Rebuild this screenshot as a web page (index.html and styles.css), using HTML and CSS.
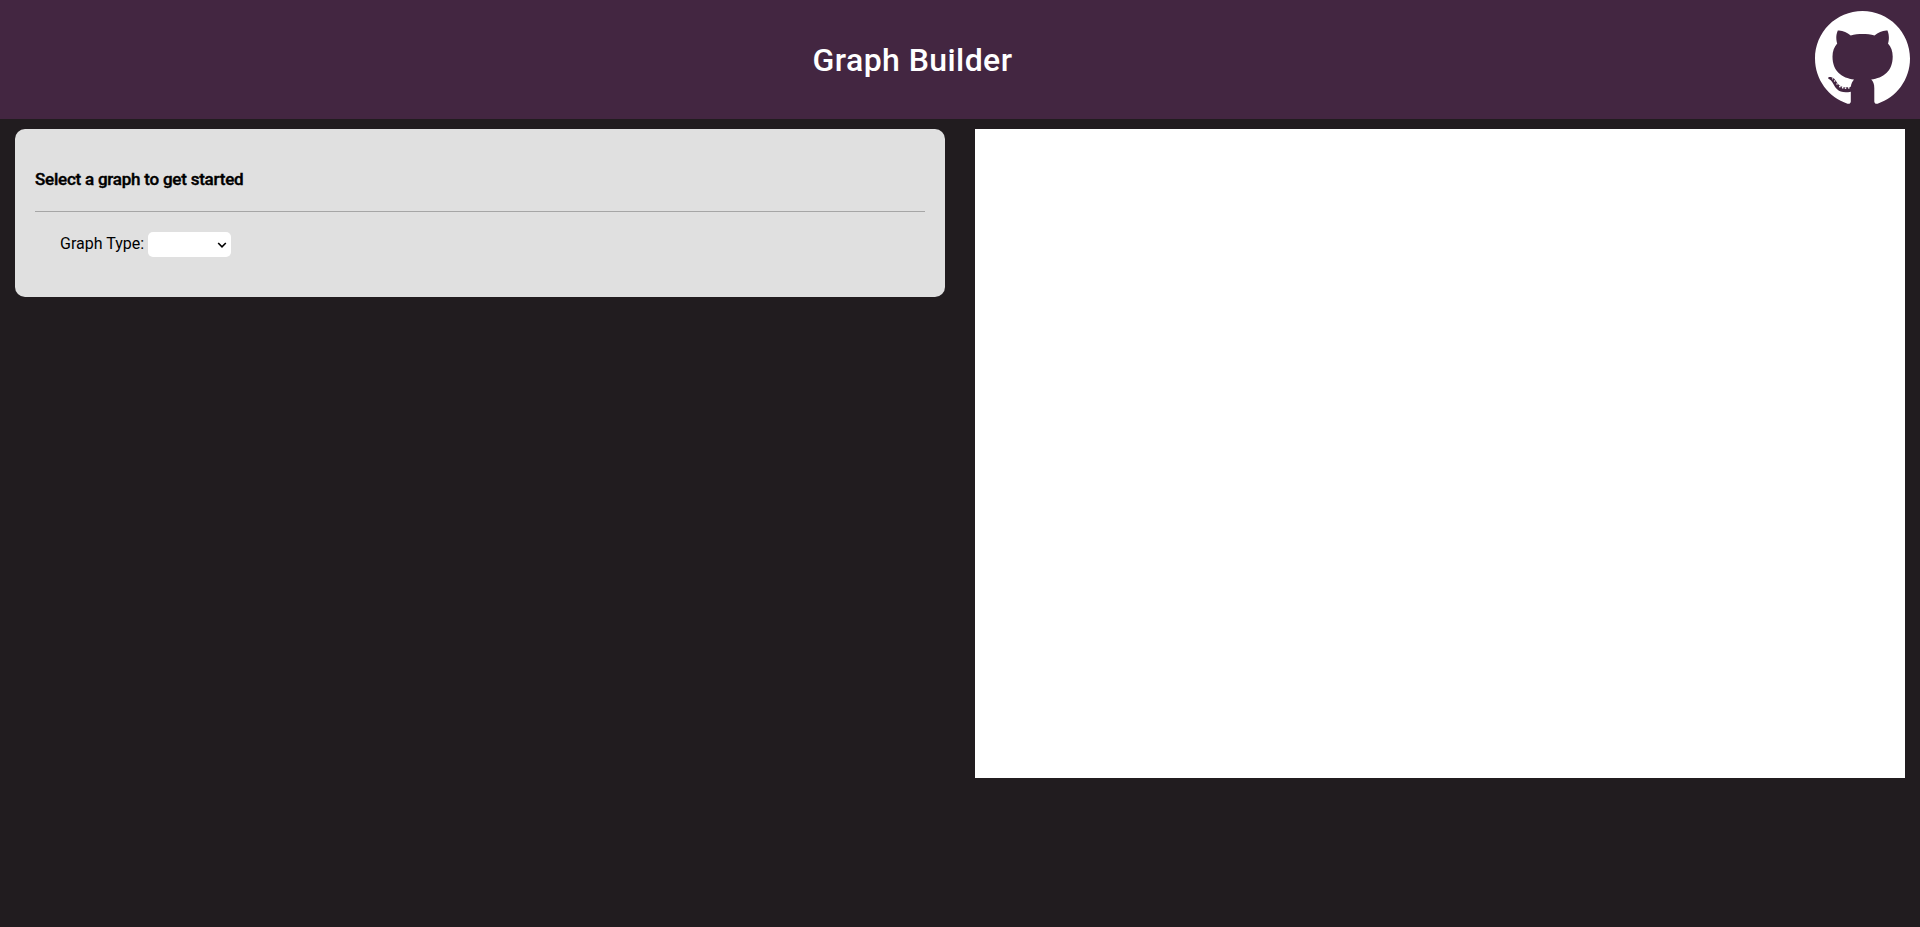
FILE: index.html
```html
<!DOCTYPE html>
<html lang="en">
<head>
<meta charset="utf-8">
<title>Graph Builder</title>
<link rel="stylesheet" href="styles.css">
</head>
<body>
<header class="header">
  <h1 class="title">Graph Builder</h1>
  <a class="repo" href="#" aria-label="GitHub">
    <svg class="mark" viewBox="0 0 95 93">
      <path fill="#fff" d="M47.500 0C21 0 0 21.300 0 47.600c0 21.100 13.600 38.900 32.500 45.100 2.400.5 3.300-1 3.300-2.300V80.800C24 83 20.700 77.500 18.500 73.300 17 70 15 68.700 13.500 67.800c-1.500-1.300 1-2.300 3-1.600 4.500 1.500 5 6.100 8.500 8.600 3.500 2 7.500 1.700 10.800.9.500-3.300 1.700-5.400 3.200-7.200C27 67 17.500 60.500 17.500 45.500c0-5.500 1.700-9.500 4.700-13-.8-2.500-1.800-7.500.6-13 4.700-.5 9 2 12.900 4.900 7.500-1.800 16.300-1.800 23.800 0 3.900-2.900 8.300-5.400 13-4.900 2.200 5.500 1.300 10.500.5 13 3.100 3.500 4.700 7.500 4.700 13 0 15-9.500 21.500-21.500 23 2 1.700 3.100 4.500 3.100 8.800v13.100c0 1.300.9 2.800 3.300 2.300C81.500 86.500 95 68.700 95 47.600 95 21.300 73.700 0 47.500 0z"/>
      <g fill="#fff">
        <circle cx="17.600" cy="67.800" r=".6"/>
        <circle cx="19.600" cy="70" r=".7"/>
        <circle cx="22" cy="73" r=".8"/>
        <circle cx="24.900" cy="75.600" r=".9"/>
        <circle cx="27.700" cy="76.700" r=".9"/>
        <circle cx="30.500" cy="77.100" r=".9"/>
        <circle cx="33.800" cy="76.800" r=".9"/>
      </g>
    </svg>
  </a>
</header>
<main class="columns">
  <section class="panel">
    <h4 class="heading">Select a graph to get started</h4>
    <div class="field">
      <label for="type">Graph Type:</label>
      <div class="picker">
        <select id="type" class="select"><option></option></select>
        <svg class="chevron" viewBox="0 0 10 8"><path d="M1.200 2 5 5.800 8.800 2" fill="none" stroke="#000" stroke-width="1.600"/></svg>
      </div>
    </div>
  </section>
  <section class="canvas"></section>
</main>
</body>
</html>
```
FILE: styles.css
```css
body { margin: 0; background: #211c1f; font-family: Roboto, sans-serif; font-size: 16px; color: #000; }
.header { display: flex; align-items: center; height: 119px; background: #432641; }
.title { flex: 1; margin: 0; padding-left: 10px; text-align: center; color: #fff; font-size: 32px; font-weight: 500; line-height: 38px; letter-spacing: 0.42px; }
.repo { display: block; width: 95px; padding: 0 10px 4px 0; }
.mark { display: block; width: 95px; height: 93px; }
.columns { display: grid; grid-template-columns: 1fr 1fr; gap: 30px; padding: 10px 15px; align-items: start; }
.panel { box-sizing: border-box; height: 168px; padding: 20px; border-radius: 10px; background: #e0e0e0; }
.heading { box-sizing: border-box; height: 63px; margin: 0; padding-top: 21px; border-bottom: 1px solid #a6a6a6; font-size: 17px; font-weight: 500; line-height: 19px; letter-spacing: -0.23px; -webkit-text-stroke: 0.4px #000; }
.field { display: flex; gap: 4px; padding: 20px 25px; line-height: 24px; }
.picker { position: relative; width: 83px; height: 25px; }
.select { appearance: none; display: block; width: 83px; height: 25px; border: 0; border-radius: 5px; background: #fff; }
.chevron { position: absolute; right: 4px; top: 9px; width: 10px; height: 8px; pointer-events: none; }
.canvas { height: 649px; background: #fff; }
```
